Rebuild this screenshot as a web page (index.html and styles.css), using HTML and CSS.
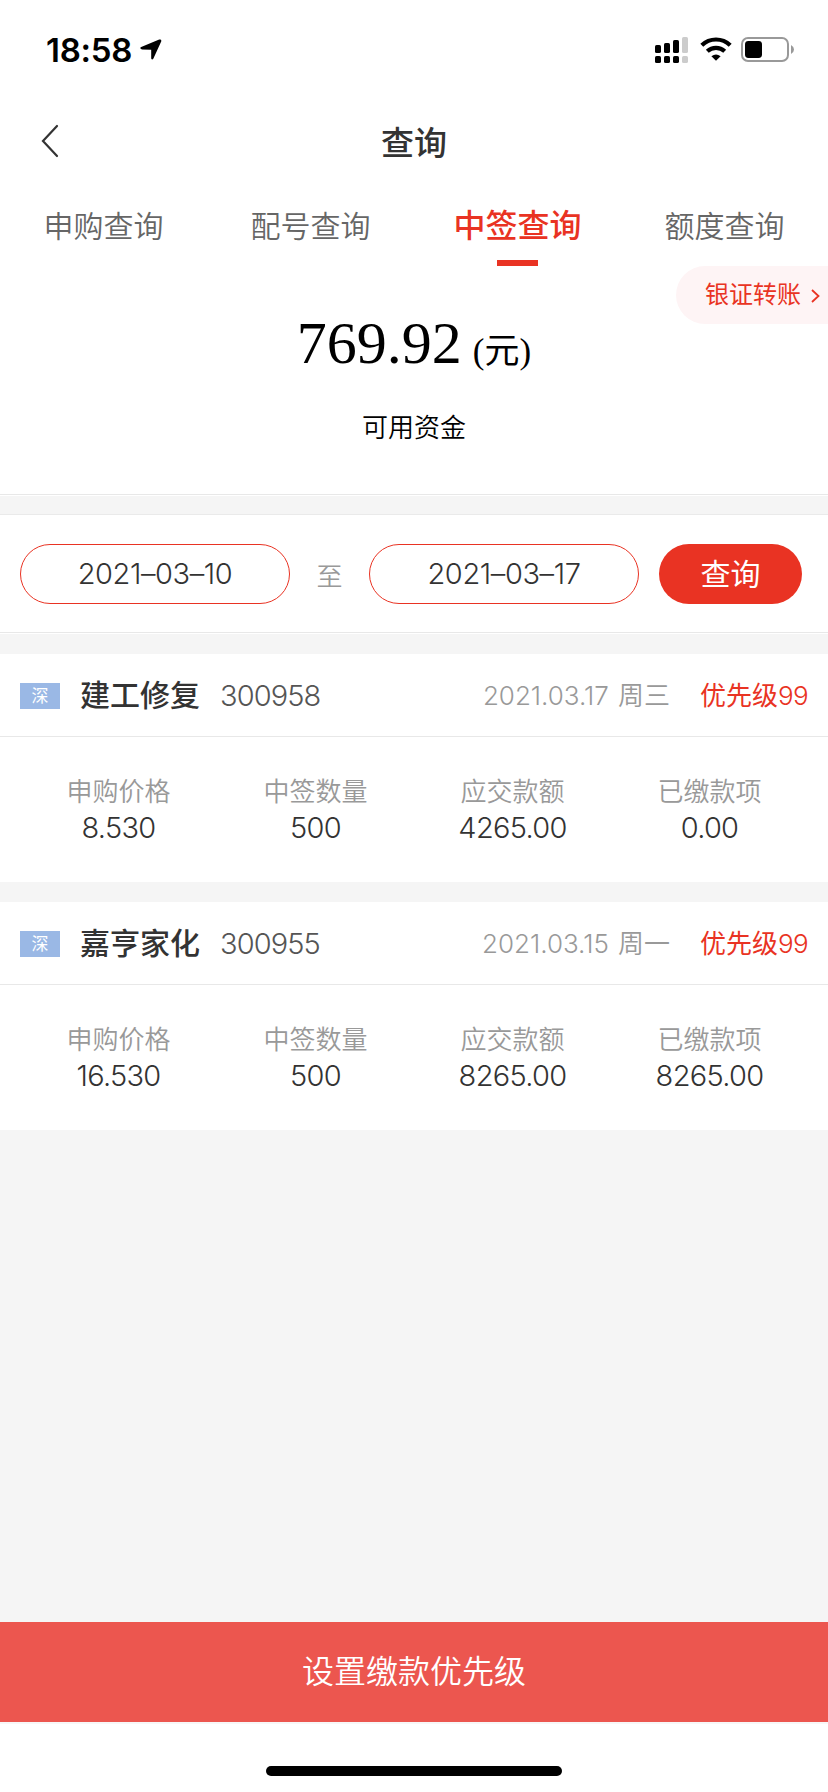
FILE: index.html
```html
<!DOCTYPE html>
<html lang="zh-CN">
<head>
<meta charset="utf-8">
<title>查询</title>
<link rel="stylesheet" href="styles.css">
</head>
<body>
<div class="screen">
  <header class="status">
    <div class="status-left">
      <span class="clock">18:58</span>
      <svg class="location" width="22" height="22" viewBox="0 0 22 22"><path d="M1.2 7.9 19.2.5Q21.8-.1 21.2 2.5L13.3 19.7Q12 21.4 11.2 19.4L11.2 10.8 2 10.5Q-1 9.2 1.2 7.9Z"/></svg>
    </div>
    <div class="status-right">
      <svg width="34" height="28" viewBox="0 0 34 28">
        <rect x="0" y="9" width="6" height="8" rx="1.6"/><rect x="9" y="7" width="6" height="10" rx="1.6"/><rect x="18" y="4" width="6" height="13" rx="1.6"/><rect class="dim" x="27" y="1" width="6" height="16" rx="1.6"/>
        <rect x="0" y="20" width="6" height="7" rx="1.6"/><rect x="9" y="20" width="6" height="7" rx="1.6"/><rect x="18" y="20" width="6" height="7" rx="1.6"/><rect class="dim" x="27" y="20" width="6" height="7" rx="1.6"/>
      </svg>
      <svg class="wifi" width="32" height="24" viewBox="0 0 32 24">
        <g fill="none" stroke="#000" stroke-width="4.2"><path d="M1.8 8.2A20.5 20.5 0 0 1 30.2 8.2"/><path d="M7.3 14.2A12.8 12.8 0 0 1 24.7 14.2"/></g>
        <path d="M11.4 19.2Q16 15.8 20.6 19.2L16 23.8Z"/>
      </svg>
      <svg class="battery" width="53" height="25" viewBox="0 0 53 25">
        <rect x="1" y="1" width="46" height="23" rx="6" fill="none" stroke="#999" stroke-width="2"/>
        <rect x="4" y="4" width="17" height="17" rx="3.4"/>
        <path d="M50 8Q53 9.6 53 12.5T50 17Z" fill="#999"/>
      </svg>
    </div>
  </header>

  <div class="navbar">
    <svg class="back" width="18" height="34" viewBox="0 0 18 34"><path d="M16 2 2 17 16 32"/></svg>
    <h1 class="title">查询</h1>
  </div>

  <nav class="tabs">
    <span class="tab">申购查询</span>
    <span class="tab">配号查询</span>
    <span class="tab active">中签查询</span>
    <span class="tab">额度查询</span>
  </nav>

  <section class="funds">
    <a class="transfer">银证转账<svg width="9" height="16" viewBox="0 0 9 16"><path d="M1 2 7.5 8 1 14"/></svg></a>
    <div class="amount">769.92<span class="unit">(元)</span></div>
    <div class="caption">可用资金</div>
  </section>

  <section class="filter">
    <span class="date">2021–03–10</span>
    <span class="to">至</span>
    <span class="date">2021–03–17</span>
    <button class="search">查询</button>
  </section>

  <section class="card">
    <div class="card-head">
      <span class="market">深</span><b class="name">建工修复</b><span class="code">300958</span>
      <span class="day"><span class="num">2021.03.17</span><span class="weekday">周三</span></span><span class="priority">优先级<span class="num">99</span></span>
    </div>
    <div class="stats">
      <div class="stat"><span class="label">申购价格</span><span class="value">8.530</span></div>
      <div class="stat"><span class="label">中签数量</span><span class="value">500</span></div>
      <div class="stat"><span class="label">应交款额</span><span class="value">4265.00</span></div>
      <div class="stat"><span class="label">已缴款项</span><span class="value">0.00</span></div>
    </div>
  </section>

  <section class="card">
    <div class="card-head">
      <span class="market">深</span><b class="name">嘉亨家化</b><span class="code">300955</span>
      <span class="day"><span class="num">2021.03.15</span><span class="weekday">周一</span></span><span class="priority">优先级<span class="num">99</span></span>
    </div>
    <div class="stats">
      <div class="stat"><span class="label">申购价格</span><span class="value">16.530</span></div>
      <div class="stat"><span class="label">中签数量</span><span class="value">500</span></div>
      <div class="stat"><span class="label">应交款额</span><span class="value">8265.00</span></div>
      <div class="stat"><span class="label">已缴款项</span><span class="value">8265.00</span></div>
    </div>
  </section>

  <button class="submit">设置缴款优先级</button>
  <footer class="home"><div class="home-bar"></div></footer>
</div>
</body>
</html>
```

FILE: styles.css
```css
* { box-sizing: border-box; }
body {
  margin: 0;
  background: #f5f5f5;
  color: #333;
  font-family: "Noto Sans CJK SC", sans-serif;
}
button { border: 0; padding: 0; font-family: inherit; }
.screen {
  width: 828px;
  height: 1792px;
  display: flex;
  flex-direction: column;
  overflow: hidden;
  white-space: nowrap;
}
.status, .navbar, .tabs, .funds, .filter, .card, .submit, .home { flex: none; }

.status {
  height: 96px;
  padding: 0 34px 0 46px;
  display: flex;
  justify-content: space-between;
  background: #fff;
}
.status-left { display: flex; }
.clock {
  width: 94px;
  padding-top: 30px;
  font: 600 33px/40px Inter, sans-serif;
  letter-spacing: -0.3px;
  color: #000;
}
.location { margin-top: 39px; }
.status-right { display: flex; align-items: flex-start; padding-top: 36px; }
.status-right .dim { fill: #ccc; }
.wifi { margin: 1px 9px 0 11px; }
.battery { margin-top: 1px; }

.navbar {
  height: 90px;
  display: grid;
  grid-template-columns: 100px 1fr 100px;
  align-items: center;
  background: #fff;
}
.back { margin-left: 41px; fill: none; stroke: #333; stroke-width: 2.2; stroke-linecap: round; }
.title { margin: 0; text-align: center; font-size: 33px; font-weight: 500; line-height: 50px; }

.tabs { height: 80px; display: grid; grid-template-columns: repeat(4, 1fr); background: #fff; }
.tab {
  padding-top: 16px;
  display: flex;
  flex-direction: column;
  align-items: center;
  font-size: 30px;
  line-height: 44px;
  font-weight: 350;
  color: #666;
}
.active { padding-top: 15px; font-size: 32px; font-weight: 500; color: #e93323; }
.active::after { content: ""; width: 41px; height: 6px; margin-top: 15px; background: #e93323; }

.funds {
  height: 230px;
  display: flex;
  flex-direction: column;
  align-items: center;
  background: #fff;
  border-bottom: 1px solid #fff;
  box-shadow: inset 0 -1px #e8e8e8;
  color: #000;
}
.transfer {
  align-self: flex-end;
  width: 152px;
  height: 58px;
  padding: 0 8px 5px 29px;
  display: flex;
  align-items: center;
  justify-content: space-between;
  border-radius: 29px 0 0 29px;
  background: #fef4f5;
  color: #e93323;
  font-size: 24px;
}
.transfer svg { margin-top: 7px; fill: none; stroke: #e93323; stroke-width: 1.8; }
.amount { margin-top: -17px; font: 60px/72px "Liberation Serif", "Noto Sans CJK SC", serif; }
.unit { margin-left: 11px; font-size: 35px; }
.caption { margin-top: 19px; font-size: 26px; line-height: 38px; font-weight: 350; }

.filter {
  height: 120px;
  margin-top: 18px;
  padding: 29px 26px 0 20px;
  display: flex;
  align-items: flex-start;
  background: #fff;
  border-top: 1px solid #eaeaea;
  border-bottom: 1px solid #fff;
  box-shadow: inset 0 -1px #e8e8e8;
}
.date {
  width: 270px;
  height: 60px;
  border: 1px solid #e93323;
  border-radius: 30px;
  text-align: center;
  font: 350 29px/58px Inter, sans-serif;
  letter-spacing: -0.4px;
}
.to { width: 79px; text-align: center; font-size: 26px; line-height: 62px; font-weight: 350; color: #999; }
.search {
  width: 143px;
  height: 60px;
  margin-left: 20px;
  padding-bottom: 4px;
  border-radius: 30px;
  background: #e93323;
  color: #fff;
  font-size: 30px;
}

.card { height: 228px; margin-top: 20px; background: #fff; }
.card-head {
  height: 83px;
  padding: 0 20px;
  display: flex;
  align-items: center;
  border-bottom: 1px solid #e8e8e8;
}
.market {
  width: 40px;
  height: 26px;
  margin-top: 2px;
  text-align: center;
  background: #9ab8e5;
  color: #fff;
  font-size: 17px;
  line-height: 23px;
}
.name { margin: 0 0 4px 20px; font-size: 30px; font-weight: 500; }
.code { margin: 2px 0 0 20px; font: 350 29px/40px Inter, sans-serif; letter-spacing: -0.9px; color: #555; }
.day { margin: 0 0 3px auto; font-size: 26px; font-weight: 350; color: #999; }
.day .num { letter-spacing: 0; }
.weekday { margin-left: 9px; }
.num { font-family: Inter, sans-serif; font-weight: 350; letter-spacing: -0.6px; }
.priority { margin: 0 0 3px 30px; font-size: 26px; color: #e93323; }
.stats { padding: 35px 20px 0; display: grid; grid-template-columns: repeat(4, 1fr); }
.stat { display: flex; flex-direction: column; align-items: center; }
.label { font-size: 26px; line-height: 36px; font-weight: 350; color: #999; }
.value { font: 350 29px/40px Inter, sans-serif; letter-spacing: -0.7px; }

.submit {
  height: 100px;
  margin-top: auto;
  padding-bottom: 6px;
  background: #ec564f;
  color: #fff;
  font-size: 32px;
  font-weight: 350;
}
.home { height: 70px; padding-top: 42px; border-top: 2px solid #f7f7f7; background: #fff; }
.home-bar { width: 296px; height: 10px; margin: 0 auto; border-radius: 5px; background: #000; }
```
